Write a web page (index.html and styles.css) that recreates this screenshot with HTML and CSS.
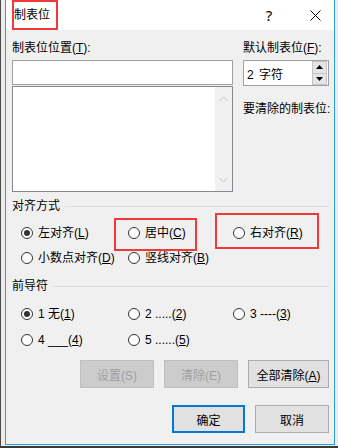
FILE: index.html
```html
<!DOCTYPE html>
<html lang="zh-CN">
<head>
    <meta charset="UTF-8">
    <title>制表位</title>
    <link rel="stylesheet" href="styles.css">
</head>
<body>
    <div class="screen">
        <div class="dialog">
            <div class="titlebar">
                <span class="title">制表位</span>
                <span class="caption help">?</span>
                <span class="caption close">
                    <svg width="11" height="11" viewBox="0 0 11 11"><path d="M0.5 0.5L10.5 10.5M10.5 0.5L0.5 10.5" stroke="#000" stroke-width="1" fill="none"/></svg>
                </span>
            </div>
            <div class="content">
                <div class="top">
                    <div class="left">
                        <div class="lbl">制表位位置(<u>T</u>):</div>
                        <div class="field"></div>
                        <div class="list">
                            <div class="scroll">
                                <svg width="9" height="6" viewBox="0 0 9 6"><path d="M0.5 5L4.5 1L8.5 5" stroke="#c2c2c2" fill="none"/></svg>
                                <svg width="9" height="6" viewBox="0 0 9 6"><path d="M0.5 1L4.5 5L8.5 1" stroke="#c2c2c2" fill="none"/></svg>
                            </div>
                        </div>
                    </div>
                    <div class="right">
                        <div class="lbl">默认制表位(<u>F</u>):</div>
                        <div class="spin">
                            <span class="spin-value">2&nbsp;字符</span>
                            <span class="spin-btns">
                                <span class="spin-btn"><svg width="7" height="4" viewBox="0 0 7 4"><path d="M3.5 0L7 4H0Z" fill="#000"/></svg></span>
                                <span class="spin-btn"><svg width="7" height="4" viewBox="0 0 7 4"><path d="M0 0H7L3.5 4Z" fill="#000"/></svg></span>
                            </span>
                        </div>
                        <div class="lbl hint">要清除的制表位:</div>
                    </div>
                </div>

                <div class="group-head first">对齐方式</div>
                <div class="radios align">
                    <label class="radio"><span class="dot on"></span><span>左对齐(<u>L</u>)</span></label>
                    <label class="radio mark mark-c"><span class="dot"></span><span>居中(<u>C</u>)</span></label>
                    <label class="radio mark mark-r"><span class="dot"></span><span>右对齐(<u>R</u>)</span></label>
                    <label class="radio"><span class="dot"></span><span>小数点对齐(<u>D</u>)</span></label>
                    <label class="radio"><span class="dot"></span><span>竖线对齐(<u>B</u>)</span></label>
                </div>

                <div class="group-head">前导符</div>
                <div class="radios leader">
                    <label class="radio"><span class="dot on"></span><span>1 无(<u>1</u>)</span></label>
                    <label class="radio"><span class="dot"></span><span>2 .....(<u>2</u>)</span></label>
                    <label class="radio"><span class="dot"></span><span>3 ----(<u>3</u>)</span></label>
                    <label class="radio"><span class="dot"></span><span>4 ___(<u>4</u>)</span></label>
                    <label class="radio"><span class="dot"></span><span>5 ......(<u>5</u>)</span></label>
                </div>

                <div class="btn-row">
                    <button class="btn" disabled>设置(S)</button>
                    <button class="btn" disabled>清除(E)</button>
                    <button class="btn wide"><span>全部清除(<u>A</u>)</span></button>
                </div>
                <div class="btn-row actions">
                    <button class="btn default">确定</button>
                    <button class="btn">取消</button>
                </div>
            </div>
        </div>
    </div>
</body>
</html>
```

FILE: styles.css
```css
* {
    box-sizing: border-box;
}
body {
    margin: 0;
    background: #ececec;
    font-family: "Liberation Sans", "Noto Sans CJK SC", sans-serif;
    font-size: 12px;
    color: #000;
}
.screen {
    height: 448px;
    border-left: 1px solid #4a4a4a;
    border-bottom: 2px solid #3a3a3a;
    padding-left: 4px;
}
.dialog {
    width: 330px;
    height: 445px;
    background: #f0f0f0;
    border: 1px solid #26a0da;
    border-top: none;
}
.titlebar {
    height: 30px;
    background: #fff;
    display: flex;
}
.title {
    margin-left: 6px;
    width: 46px;
    height: 30px;
    border: 2px solid #ee3a3a;
    display: flex;
    align-items: center;
    line-height: 16px;
}
.caption {
    display: flex;
    align-items: center;
    justify-content: center;
}
.help {
    margin-left: auto;
    width: 46px;
    font-family: "Noto Sans", sans-serif;
    font-size: 15px;
}
.close {
    width: 42px;
    padding-left: 4px;
}
.content {
    padding: 0 5px 0 6px;
}
.top {
    display: flex;
    gap: 10px;
    margin-top: 10px;
}
.left {
    width: 221px;
}
.right {
    width: 86px;
}
.lbl {
    height: 16px;
    line-height: 16px;
    white-space: nowrap;
}
.field {
    margin-top: 4px;
    height: 25px;
    background: #fff;
    border: 1px solid #a0a0a0;
}
.list {
    margin-top: 1px;
    height: 106px;
    background: #fff;
    border: 1px solid #828790;
    display: flex;
    justify-content: flex-end;
}
.scroll {
    width: 17px;
    background: #f0f0f0;
    display: flex;
    flex-direction: column;
    justify-content: space-between;
    align-items: center;
    padding: 9px 0 8px;
}
.spin {
    margin-top: 4px;
    height: 26px;
    background: #fff;
    border: 1px solid #a0a0a0;
    display: flex;
    align-items: center;
    padding-left: 3px;
}
.spin-value {
    word-spacing: 2px;
}
.spin-btns {
    margin-left: auto;
    width: 15px;
    height: 24px;
    display: flex;
    flex-direction: column;
    margin-right: 1px;
}
.spin-btn {
    flex: 1;
    background: #e5e5e5;
    border: 1px solid #c4c4c4;
    display: flex;
    align-items: center;
    justify-content: center;
}
.spin-btn + .spin-btn {
    border-top: none;
}
.hint {
    margin-top: 15px;
}
.group-head {
    display: flex;
    align-items: center;
    height: 16px;
    line-height: 16px;
    margin-top: 12px;
}
.group-head.first {
    margin-top: 6px;
}
.group-head::after {
    content: "";
    flex: 1;
    height: 1px;
    background: #dcdcdc;
    margin-left: 5px;
}
.radios {
    display: grid;
    grid-template-columns: 107px 105px 1fr;
    row-gap: 9px;
    padding-left: 9px;
    margin-top: 11px;
}
.radios.leader {
    row-gap: 10px;
    margin-top: 12px;
}
.radio {
    display: flex;
    align-items: center;
    gap: 5px;
    height: 16px;
    line-height: 16px;
    white-space: nowrap;
}
.dot {
    flex: none;
    width: 12px;
    height: 12px;
    border: 1px solid #333;
    border-radius: 50%;
    background: #fff;
    display: flex;
    align-items: center;
    justify-content: center;
}
.dot.on::after {
    content: "";
    width: 6px;
    height: 6px;
    border-radius: 50%;
    background: #333;
}
.mark {
    position: relative;
}
.mark::before {
    content: "";
    position: absolute;
    border: 2px solid #ee3a3a;
}
.mark-c::before {
    left: -14px;
    top: -7px;
    width: 79px;
    height: 29px;
}
.mark-r::before {
    left: -18px;
    top: -12px;
    width: 100px;
    height: 32px;
}
.btn-row {
    display: flex;
    justify-content: flex-end;
    gap: 10px;
    margin-top: 12px;
}
.btn-row.actions {
    margin-top: 17px;
}
.btn {
    width: 74px;
    height: 28px;
    padding: 0;
    border: 1px solid #adadad;
    background: #e1e1e1;
    font: inherit;
    color: #000;
    display: flex;
    align-items: center;
    justify-content: center;
}
.btn.wide {
    width: 81px;
}
.btn:disabled {
    background: #cccccc;
    border-color: #bfbfbf;
    color: #a0a0a0;
}
.btn.default {
    width: 73px;
    border: 2px solid #0078d7;
}
```
